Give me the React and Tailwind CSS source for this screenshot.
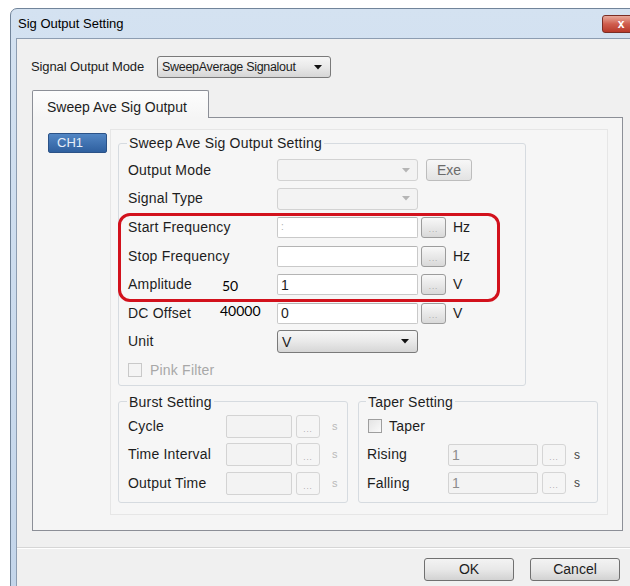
const arrowDark = "#111";

function Arrow({ color = arrowDark }) {
  return (
    <svg width="8" height="5" viewBox="0 0 8 5" className="shrink-0">
      <path d="M0 0h8L4 4.5z" fill={color} />
    </svg>
  );
}

function Combo({ value, className, textClass = "text-[14px]", disabled }) {
  return (
    <div
      className={`flex items-center justify-between rounded-[3px] border ${className} ${
        disabled
          ? "border-[#d2d2d2] bg-[#f3f3f3] pr-[7px]"
          : "border-[#7a7a7a] bg-gradient-to-b from-[#f6f6f6] via-[#e9e9e9] to-[#d6d6d6] pr-[8px]"
      }`}
    >
      <span className={`whitespace-nowrap pl-[4px] leading-none ${textClass}`}>{value}</span>
      <Arrow color={disabled ? "#b5b5b5" : arrowDark} />
    </div>
  );
}

function TextBox({ value, className, disabled, valueClass = "" }) {
  return (
    <div
      className={`flex items-center rounded-[2px] border pl-[3px] text-[14px] leading-none ${className} ${
        disabled ? "border-[#d3d3d3] bg-[#f3f3f3] text-[#8d8d8d]" : "border-[#c9c9c9] border-t-[#b4b4b4] bg-white"
      }`}
    >
      <span className={valueClass}>{value}</span>
    </div>
  );
}

function Dots({ className, disabled }) {
  return (
    <div
      className={`flex items-end justify-center rounded-[3px] border pb-[3px] ${className} ${
        disabled
          ? "border-[#d5d5d5] bg-[#f5f5f5]"
          : "border-[#9c9c9c] bg-gradient-to-b from-[#f8f8f8] to-[#d9d9d9]"
      }`}
    >
      <span className="text-[8px] leading-[8px] tracking-[1px] text-[#9a9a9a]">...</span>
    </div>
  );
}

function Check({ disabled }) {
  return (
    <div
      className={`h-[14px] w-[14px] border ${
        disabled ? "border-[#c9c9c9] bg-[#f4f4f4]" : "border-[#9e9e9e] bg-gradient-to-br from-[#e4e4e4] to-[#fafafa]"
      }`}
    />
  );
}

function Button({ children }) {
  return (
    <div className="flex h-[23px] w-[90px] items-center justify-center rounded-[3px] border border-[#707070] bg-gradient-to-b from-[#f3f3f3] via-[#e8e8e8] to-[#d2d2d2] text-[14px]">
      {children}
    </div>
  );
}

// one line of the main setting group: label, then whatever control follows
function Row({ label, dim, children }) {
  return (
    <div className="relative flex h-[28.6px] items-center pl-[9px]">
      <span className={`w-[149px] text-[14px] tracking-[0.2px] ${dim ? "text-[#a5a5a5]" : ""}`}>{label}</span>
      {children}
    </div>
  );
}

function NumRow({ label, value, unit, valueClass }) {
  return (
    <Row label={label}>
      <TextBox value={value} className="h-[21px] w-[141px]" valueClass={valueClass} />
      <Dots className="ml-[3px] h-[21px] w-[25px]" />
      <span className="ml-[7px] text-[14px]">{unit}</span>
    </Row>
  );
}

function BurstRow({ label }) {
  return (
    <div className="flex h-[28.6px] items-center pl-[9px]">
      <span className="w-[98px] text-[14px] tracking-[0.2px]">{label}</span>
      <TextBox disabled className="h-[23px] w-[66px]" />
      <Dots disabled className="ml-[4px] h-[23px] w-[24px]" />
      <span className="ml-[12px] text-[11px] text-[#b9b9b9]">s</span>
    </div>
  );
}

function TaperRow({ label }) {
  return (
    <div className="flex h-[28.6px] items-center pl-[8px]">
      <span className="w-[81px] text-[14px] tracking-[0.2px]">{label}</span>
      <TextBox disabled value="1" className="h-[22px] w-[90px]" />
      <Dots disabled className="ml-[4px] h-[22px] w-[24px]" />
      <span className="ml-[8px] text-[12px] text-[#444]">s</span>
    </div>
  );
}

export default function App() {
  return (
    <div className="h-[586px] w-[630px] overflow-hidden bg-white font-['Liberation_Sans',Arial,sans-serif] text-[#1d1d1d]">
      <div className="ml-[10px] mt-[8px] h-[600px] w-[636px] rounded-tl-[7px] border border-[#71849a] bg-gradient-to-b from-[#d4e2f1] to-[#c3d5ea]">
        {/* title bar */}
        <div className="flex h-[29px] items-start justify-between">
          <span className="pl-[7px] pt-[7px] text-[13px] leading-[16px] text-black">Sig Output Setting</span>
          <div className="mr-[5px] mt-[6px] flex h-[18px] w-[38px] items-center justify-center rounded-[3px] border border-[#7b2e25] bg-gradient-to-b from-[#e7a99c] via-[#cf5d4d] to-[#b8392a]">
            <span className="text-[12px] font-bold leading-none text-white">x</span>
          </div>
        </div>

        {/* client area */}
        <div className="ml-[5px] h-[570px] border-l border-t border-[#8d9db1] bg-[#f0f0f0]">
          <div className="flex items-center pl-[14px] pt-[17px]">
            <span className="w-[126px] whitespace-nowrap text-[13px] tracking-[-0.1px]">Signal Output Mode</span>
            <Combo
              value="SweepAverage Signalout"
              className="h-[22px] w-[174px]"
              textClass="text-[12.5px] tracking-[-0.3px]"
            />
          </div>

          <div className="ml-[15px] mt-[12px]">
            <div className="relative z-10 -mb-px h-[28px] w-[177px] rounded-t-[2px] border border-b-0 border-[#8c8f97] bg-gradient-to-b from-[#fdfdfd] to-[#f5f5f5] pl-[14px] pt-[6px] text-[14px]">
              Sweep Ave Sig Output
            </div>
            <div className="flex h-[414px] w-[591px] border border-[#8c8f97] bg-[#f5f5f5]">
              {/* channel list */}
              <div className="w-[77px] shrink-0 pl-[15px] pt-[15px]">
                <div className="flex h-[20px] w-[59px] items-center rounded-[2px] border border-[#2b5287] bg-gradient-to-b from-[#5286c4] to-[#2f609f] pl-[8px] text-[13px] text-[#e6eef8]">
                  CH1
                </div>
              </div>

              <div className="mt-[11px] h-[386px] w-[498px] border border-[#e6e6e6] bg-[#f6f6f6]">
                <fieldset className="ml-[7px] mt-[5px] w-[408px] rounded-[3px] border border-[#d6dbe0] pt-[5px]">
                  <legend className="ml-[8px] px-[2px] text-[14px] leading-[16px] tracking-[0.2px]">
                    Sweep Ave Sig Output Setting
                  </legend>
                  <Row label="Output Mode">
                    <Combo disabled className="h-[22px] w-[141px]" />
                    <div className="ml-[8px] flex h-[22px] w-[46px] items-center justify-center rounded-[3px] border border-[#bdbdbd] bg-gradient-to-b from-[#f7f7f7] to-[#e3e3e3] text-[14px] text-[#6b6b6b]">
                      Exe
                    </div>
                  </Row>
                  <Row label="Signal Type">
                    <Combo disabled className="h-[22px] w-[141px]" />
                  </Row>

                  <div className="relative">
                    <NumRow label="Start Frequency" value=":" unit="Hz" valueClass="text-[10px] text-[#b0b0b0]" />
                    <NumRow label="Stop Frequency" value="" unit="Hz" />
                    <NumRow label="Amplitude" value="1" unit="V" />
                    {/* annotation ring and note */}
                    <div className="pointer-events-none absolute left-[-1px] top-0 h-[89px] w-[382px] rounded-[12px] border-[3px] border-[#d2111c]" />
                    <span className="absolute left-[103px] top-[62px] font-['Lato',sans-serif] text-[14px] text-black">50</span>
                  </div>

                  <div className="relative">
                    <NumRow label="DC Offset" value="0" unit="V" />
                    <span className="absolute left-[101px] top-[1px] font-['Lato',sans-serif] text-[14px] text-black">40000</span>
                  </div>
                  <Row label="Unit">
                    <Combo value="V" className="h-[23px] w-[141px]" />
                  </Row>
                  <div className="flex h-[28.6px] items-center pl-[9px]">
                    <Check disabled />
                    <span className="ml-[8px] text-[14px] tracking-[0.2px] text-[#a8a8a8]">Pink Filter</span>
                  </div>
                </fieldset>

                <div className="ml-[7px] mt-[8px] flex">
                  <fieldset className="w-[230px] rounded-[3px] border border-[#d6dbe0] pb-[4px] pt-[2px]">
                    <legend className="ml-[8px] px-[2px] text-[14px] leading-[16px] tracking-[0.2px]">Burst Setting</legend>
                    <BurstRow label="Cycle" />
                    <BurstRow label="Time Interval" />
                    <BurstRow label="Output Time" />
                  </fieldset>
                  <fieldset className="ml-[10px] w-[240px] rounded-[3px] border border-[#d6dbe0] pb-[4px] pt-[2px]">
                    <legend className="ml-[7px] px-[2px] text-[14px] leading-[16px] tracking-[0.2px]">Taper Setting</legend>
                    <div className="flex h-[28.6px] items-center pl-[9px]">
                      <Check />
                      <span className="ml-[7px] text-[14px] tracking-[0.2px]">Taper</span>
                    </div>
                    <TaperRow label="Rising" />
                    <TaperRow label="Falling" />
                  </fieldset>
                </div>
              </div>
            </div>
          </div>

          <div className="mt-[16px] border-t border-b border-t-[#d6d6d6] border-b-white" />
          <div className="flex gap-[16px] pl-[407px] pt-[9px]">
            <Button>OK</Button>
            <Button>Cancel</Button>
          </div>
        </div>
      </div>
    </div>
  );
}
